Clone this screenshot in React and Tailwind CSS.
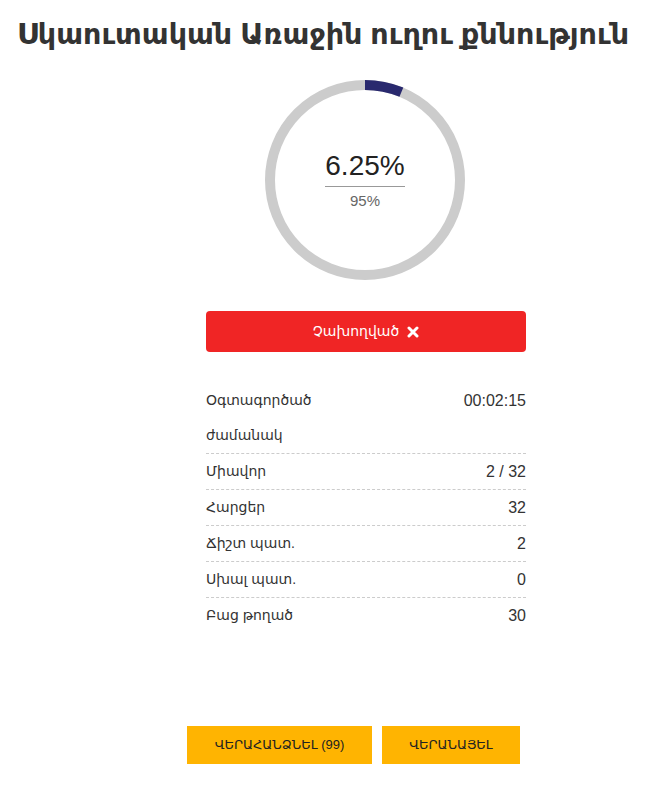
import React from 'react';

const rows = [
    { label: 'Օգտագործած ժամանակ', value: '00:02:15' },
    { label: 'Միավոր', value: '2 / 32' },
    { label: 'Հարցեր', value: '32' },
    { label: 'Ճիշտ պատ.', value: '2' },
    { label: 'Սխալ պատ.', value: '0' },
    { label: 'Բաց թողած', value: '30' },
];

function Ring({ percent }) {
    const r = 95;
    const c = 2 * Math.PI * r;
    return (
        <svg width="202" height="202" viewBox="0 0 202 202" className="absolute inset-0">
            <circle cx="101" cy="101" r={r} fill="none" stroke="#cccccc" strokeWidth="10" />
            <circle
                cx="101" cy="101" r={r} fill="none" stroke="#29296e" strokeWidth="10"
                strokeDasharray={`${(c * percent) / 100} ${c}`}
                transform="rotate(-90 101 101)"
            />
        </svg>
    );
}

export default function App() {
    return (
        <div className="w-[670px] min-h-[793px] bg-white text-[#333] font-['Liberation_Sans','DejaVu_Sans',sans-serif]">
            <h1 className="pt-[14px] w-[646px] text-center whitespace-nowrap text-[28.6px] leading-[40px] font-bold text-[#333]">
                Սկաուտական Առաջին ուղու քննություն
            </h1>

            <div className="relative mt-[25px] ml-[264px] w-[202px] h-[202px]">
                <Ring percent={6.25} />
                <div className="absolute inset-0 flex flex-col items-center justify-center">
                    <div className="text-[28px] leading-[30px] text-[#222] mt-[2px]">6.25%</div>
                    <div className="w-[80px] border-t border-[#999] mt-[5px]"></div>
                    <div className="text-[15px] leading-[20px] text-[#666] mt-[4px]">95%</div>
                </div>
            </div>

            <div className="ml-[206px] w-[320px] mt-[30px]">
                <button className="w-full h-[41px] rounded-[4px] bg-[#f02525] text-white text-[14px] flex items-center justify-center gap-[8px]">
                    Չախողված
                    <svg width="12" height="12" viewBox="0 0 12 12">
                        <path d="M2 2 L10 10 M10 2 L2 10" stroke="white" strokeWidth="3" strokeLinecap="round" />
                    </svg>
                </button>

                <div className="mt-[31px] text-[16px] text-[#333]">
                    {rows.map((r, i) => (
                        <div key={i} className={`flex justify-between leading-[35px] ${i < rows.length - 1 ? 'border-b border-dashed border-[#cccccc]' : ''}`}>
                            <span className="w-[150px] text-[14px]">{r.label}</span>
                            <span className="text-right">{r.value}</span>
                        </div>
                    ))}
                </div>
            </div>

            <div className="flex gap-[10px] ml-[187px] mt-[93px]">
                <button className="w-[185px] h-[38px] bg-[#ffb401] text-[#222] text-[13px]">ՎԵՐԱՀԱՆՁՆԵԼ (99)</button>
                <button className="w-[138px] h-[38px] bg-[#ffb401] text-[#222] text-[13px]">ՎԵՐԱՆԱՅԵԼ</button>
            </div>
        </div>
    );
}
